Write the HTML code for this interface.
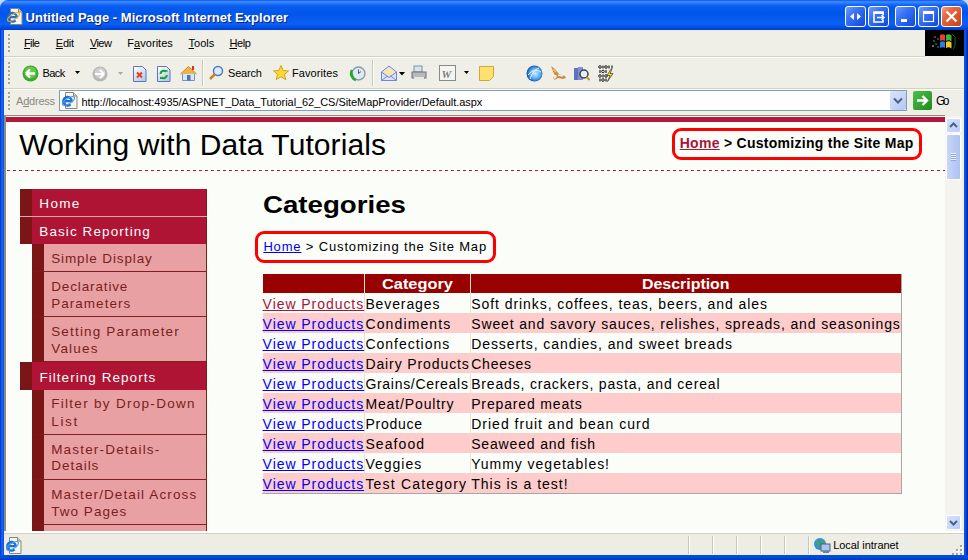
<!DOCTYPE html>
<html><head><meta charset="utf-8">
<style>

*{margin:0;padding:0;box-sizing:border-box}
html,body{width:968px;height:560px;overflow:hidden;background:#C8D8F0;font-family:"Liberation Sans",sans-serif}
.a{position:absolute;white-space:nowrap}
#title{left:0;top:0;width:968px;height:30px;border-radius:8px 8px 0 0;background:linear-gradient(#0A46D8 0,#2F80FF 1px,#3A8AFF 2px,#1F70F8 4px,#0A5CF0 6px,#0056EA 14px,#085CF2 20px,#0A60F6 24px,#0052E6 27px,#003CCC 30px)}
#ttext{left:26px;top:8px;color:#fff;font-weight:bold;font-size:13px;text-shadow:1px 1px 0 #0B1F7A}
.tb{width:21px;height:21px;top:6px;border:1px solid #fff;border-radius:3px;background:linear-gradient(135deg,#6F9CFF 0,#3A74F8 35%,#1F58E8 75%,#1848D0 100%)}
#frameL{left:0;top:30px;width:4px;height:530px;background:linear-gradient(90deg,#0028B8 0,#0A50E0 1px,#1A6AFF 2px,#0A5AF0 3px,#0050E0 4px)}
#frameR{left:964px;top:30px;width:4px;height:530px;background:linear-gradient(90deg,#0050E0 0,#0A5AF0 1px,#0048D8 2px,#0030B0 3px,#002098 4px)}
#frameB{left:0;top:555px;width:968px;height:5px;background:linear-gradient(#0050E0,#0048D8 3px,#0038B0)}
#chrome{left:4px;top:30px;width:960px;height:87px;background:#F0EFE7}
.menu{top:37px;font-size:11px;color:#000}
.menu u{text-decoration:none;border-bottom:1px solid #000}
.sep{background:#D5D2C2}
.vsep{width:1px;height:26px;top:60px;background:#C9C6B5;box-shadow:1px 0 0 #fff}
.tt{font-size:11px;color:#000;top:67px}
#page{left:4px;top:115px;width:960px;height:418px;background:#FBFDF9;overflow:hidden;border-left:2px solid #8E8C80;border-top:1px solid #8E8C80}
#status{left:4px;top:531px;width:960px;height:24px;background:#EEEDE5;border-top:2px solid #FFFFFF}
.v{font-size:14px;letter-spacing:0.75px}
.mi{left:14px;width:188px;height:27px;background:#B01434;border-left:12px solid #7A1616}
.mt{color:#fff;font-size:14px;letter-spacing:0.95px}
.si{left:26px;width:176px;background:#E8A0A2;border-left:12px solid #7A1616;border-bottom:1px solid #7E2020;border-right:1px solid #7E2020}
.st{color:#7A1E1E;font-size:14px;letter-spacing:0.75px;line-height:17px;left:45px}
.row{left:257px;width:639px;height:20px}
.pk{background:#FFCCCC}
.cell{font-size:14px;letter-spacing:0.92px;top:0}
.lnk{color:#0000FF;text-decoration:underline}

svg{display:block}

</style></head><body>

<div id="title" class="a"></div>
<div class="a" style="left:6px;top:8px;width:16px;height:16px;">
<svg width="17" height="17"><path d="M4.5 0.5h8l3.5 3.5v12.5h-11.5z" fill="#F6F5EE" stroke="#8A8672"/><path d="M12.5 0.5v3.5h3.5" fill="#D8D4C4" stroke="#8A8672"/><path d="M3 9.2h7.8a4.3 4.3 0 1 0-1.3 3.2" stroke="#1B6FDA" stroke-width="2.3" fill="none"/><ellipse cx="7.5" cy="9" rx="6.8" ry="2.6" transform="rotate(-32 7.5 9)" stroke="#F2A81C" stroke-width="1.1" fill="none"/></svg></div>
<div class="a tb" style="left:845px"><svg width="19" height="19"><path d="M8 6l-4 3.5 4 3.5zM11 6l4 3.5-4 3.5z" fill="#fff"/></svg></div>
<div class="a tb" style="left:868px"><svg width="19" height="19"><path d="M5 6v9h9v-2.5M5 6h9v2.5" stroke="#fff" stroke-width="1.6" fill="none"/><rect x="4.2" y="4.2" width="10.6" height="2.6" fill="#fff"/><path d="M8 10.5h7M12.5 8.3l2.5 2.2-2.5 2.2" stroke="#fff" stroke-width="1.4" fill="none"/></svg></div>
<div class="a tb" style="left:895px"><svg width="19" height="19"><rect x="5" y="12" width="6" height="3" fill="#fff"/></svg></div>
<div class="a tb" style="left:918px"><svg width="19" height="19"><rect x="4.5" y="4.5" width="10" height="10" stroke="#fff" stroke-width="1.2" fill="none"/><rect x="4" y="4" width="11" height="3" fill="#fff"/></svg></div>
<div class="a tb" style="left:941px;background:linear-gradient(135deg,#F4A080 0,#EA6A42 30%,#DD5328 65%,#C9411A)"><svg width="19" height="19"><path d="M4.5 4.5l10 10M14.5 4.5l-10 10" stroke="#fff" stroke-width="2.4"/></svg></div>
<div id="frameL" class="a"></div>
<div id="frameR" class="a"></div>
<div id="frameB" class="a"></div>
<div id="chrome" class="a"></div>
<div class="a" style="left:925px;top:30px;width:39px;height:26px;background:#000"><svg width="39" height="26"><g opacity="0.55"><rect x="9" y="6" width="2" height="2" fill="#E05030"/><rect x="8" y="10" width="2" height="2" fill="#3080E0"/><rect x="10" y="13" width="2" height="2" fill="#30A040"/><rect x="7" y="15" width="2" height="2" fill="#E0C030"/><rect x="12" y="8" width="2" height="2" fill="#30A040"/><rect x="12" y="16" width="2" height="2" fill="#3080E0"/></g><path d="M15 5q3-1.5 5 0v6q-2-1.5-5 0z" fill="#E8402A"/><path d="M21 5q3-1.5 5.5 0.5v6q-2.5-2-5.5-.5z" fill="#40B040"/><path d="M15 12q3-1.5 5 0v6q-2-1.5-5 0z" fill="#2A7AE8"/><path d="M21 12q3-1.5 5.5 0.5v6q-2.5-2-5.5-.5z" fill="#F0C820"/><path d="M27 4l3 3v9l-2 3" stroke="#30A040" stroke-width="1" fill="none" opacity="0.6"/></svg></div>
<div class="a sep" style="left:4px;top:56px;width:921px;height:1px;box-shadow:0 1px 0 #FAFAF6"></div>
<div class="a sep" style="left:4px;top:88px;width:960px;height:1px;box-shadow:0 1px 0 #FAFAF6"></div>
<!-- grips -->
<div class="a" style="left:8px;top:34px;width:2px;height:20px;background:repeating-linear-gradient(#A8A598 0 2px,transparent 2px 4px)"></div>
<div class="a" style="left:8px;top:62px;width:2px;height:22px;background:repeating-linear-gradient(#A8A598 0 2px,transparent 2px 4px)"></div>
<div class="a" style="left:8px;top:92px;width:2px;height:18px;background:repeating-linear-gradient(#A8A598 0 2px,transparent 2px 4px)"></div>
<!-- toolbar -->
<div class="a" style="left:22px;top:65px"><svg width="17" height="17"><circle cx="8.5" cy="8.5" r="8" fill="#3DA82E"/><circle cx="8.5" cy="7.5" r="6" fill="#62C84A"/><path d="M4 8.5l4-4M4 8.5l4 4M4 8.5h9" stroke="#fff" stroke-width="2.4" fill="none"/></svg></div>
<div class="a" style="left:75px;top:71px"><svg width="5" height="3"><path d="M0 0h5L2.5 3z" fill="#000"/></svg></div>
<div class="a" style="left:92px;top:66px"><svg width="16" height="16"><circle cx="8" cy="8" r="7.5" fill="#B5B5B5"/><circle cx="8" cy="7" r="5.5" fill="#D0D0D0"/><path d="M12 8l-4-4M12 8l-4 4M12 8H3" stroke="#fff" stroke-width="2.2" fill="none"/></svg></div>
<div class="a" style="left:118px;top:72px"><svg width="5" height="3"><path d="M0 0h5L2.5 3z" fill="#A8A8A8"/></svg></div>
<div class="a" style="left:133px;top:66px"><svg width="14" height="16"><defs><linearGradient id="pg" x1="0" y1="0" x2="0.6" y2="1"><stop offset="0" stop-color="#FFFFFF"/><stop offset="1" stop-color="#B8CCF0"/></linearGradient></defs><path d="M0.5 0.5h9l3.5 3.5v11.5h-12.5z" fill="url(#pg)" stroke="#5A78B8"/><path d="M4 6.5l5 5M9 6.5l-5 5" stroke="#E8401A" stroke-width="2"/></svg></div>
<div class="a" style="left:157px;top:66px"><svg width="14" height="16"><path d="M0.5 0.5h9l3.5 3.5v11.5h-12.5z" fill="url(#pg)" stroke="#5A78B8"/><path d="M3.5 8a3.2 3.2 0 0 1 5.5-2.3M9.8 9a3.2 3.2 0 0 1-5.5 2.3" stroke="#18A028" stroke-width="2" fill="none"/><path d="M8 4h2.5v2.5zM5.5 13H3v-2.5z" fill="#18A028"/></svg></div>
<div class="a" style="left:180px;top:65px"><svg width="17" height="16"><path d="M2.5 8.5v7h12v-7" fill="#D8E6FA" stroke="#7A90B8"/><path d="M0.5 9L8.5 1.5 16.5 9" fill="#F2B24A" stroke="#C88A28"/><rect x="12" y="1" width="2" height="4" fill="#D83020"/><rect x="7" y="10" width="3.5" height="5.5" fill="#5070B8"/></svg></div>
<div class="a vsep" style="left:202px"></div>
<div class="a" style="left:208px;top:65px"><svg width="16" height="16"><circle cx="10" cy="6" r="4.5" fill="#D8ECFF" stroke="#4A7AB8" stroke-width="1.5"/><path d="M7 9l-5 5" stroke="#D08020" stroke-width="2.5"/></svg></div>
<div class="a" style="left:273px;top:65px"><svg width="16" height="16"><path d="M8 0.5l2.2 5 5.3.4-4 3.5 1.3 5.3L8 11.8 3.2 14.7l1.3-5.3-4-3.5 5.3-.4z" fill="#FFD830" stroke="#C89010" stroke-width="0.8"/></svg></div>
<div class="a" style="left:349px;top:65px"><svg width="17" height="17"><circle cx="9.5" cy="8.5" r="6.5" fill="#DDEBF8" stroke="#8A9AA8" stroke-width="1.4"/><path d="M9.5 4.5v4l2.5-2" stroke="#505A66" stroke-width="1" fill="none"/><path d="M3 5a7 7 0 0 0 4 10" stroke="#28A828" stroke-width="2.6" fill="none"/><path d="M0.5 9.5l3.5-1 0.5 4z" fill="#28A828"/></svg></div>
<div class="a vsep" style="left:372px"></div>
<div class="a" style="left:381px;top:65px"><svg width="16" height="16"><path d="M0.5 7l7.5-6 7.5 6v8.5h-15z" fill="#D8E4FA" stroke="#7088C8"/><path d="M3 5.5q5-4 10 0v3l-5 3-5-3z" fill="#F8E4B0"/><path d="M0.5 7l7.5 5.5 7.5-5.5M0.5 15.5l6-4.5M15.5 15.5l-6-4.5" stroke="#7088C8" fill="none"/></svg></div>
<div class="a" style="left:399px;top:72px"><svg width="6" height="4"><path d="M0 0h6L3 3.5z" fill="#000"/></svg></div>
<div class="a" style="left:411px;top:65px"><svg width="16" height="16"><rect x="3" y="1" width="8" height="6" fill="#D8E4F0" stroke="#8090A0"/><rect x="1" y="7" width="14" height="6" fill="#B8B8B8" stroke="#707070"/><rect x="3" y="12" width="10" height="3" fill="#E8E8E8"/></svg></div>
<div class="a" style="left:439px;top:65px"><svg width="17" height="16"><rect x="0.5" y="0.5" width="16" height="15" fill="#F4F4F0" stroke="#8A8A8A"/><text x="2.5" y="12.5" font-size="11" font-weight="bold" font-style="italic" fill="#808080" font-family="Liberation Serif">W</text></svg></div>
<div class="a" style="left:464px;top:71px"><svg width="5" height="3"><path d="M0 0h5L2.5 3z" fill="#000"/></svg></div>
<div class="a" style="left:479px;top:66px"><svg width="15" height="15"><path d="M0.5 0.5h14v10l-4 4h-10z" fill="#FFE070" stroke="#D0A830"/></svg></div>
<div class="a" style="left:526px;top:65px"><svg width="17" height="17"><defs><radialGradient id="gl" cx="0.55" cy="0.5" r="0.55"><stop offset="0" stop-color="#C8ECFF"/><stop offset="0.6" stop-color="#58A8F0"/><stop offset="1" stop-color="#1048A8"/></radialGradient></defs><circle cx="8.5" cy="8.5" r="8" fill="url(#gl)"/><path d="M2 10q6.5-8 13-3M4 14q3-9 9-11" stroke="#F0F8FF" stroke-width="0.9" fill="none"/></svg></div>
<div class="a" style="left:550px;top:65px"><svg width="17" height="16"><path d="M1 1l4 3 4 5 6 2 1 2-3 1-5-1-3 2-2-2 1-4z" fill="#D08A40"/><path d="M2 9l3 4 1-2zM8 10l5 1" stroke="#F4F0E8" stroke-width="1.5" fill="none"/><path d="M3 4l3 3" stroke="#F0C080" stroke-width="1.2"/></svg></div>
<div class="a" style="left:573px;top:65px"><svg width="17" height="17"><rect x="1" y="3" width="4" height="12" fill="#6070C0"/><rect x="5" y="2" width="5" height="13" fill="#8090D0"/><circle cx="11" cy="9" r="4" fill="#E0F0FF" stroke="#404040" stroke-width="1.5"/><path d="M13.5 12l3 3" stroke="#D09030" stroke-width="2"/></svg></div>
<div class="a" style="left:598px;top:65px"><svg width="17" height="17"><g fill="none" stroke="#202020" stroke-width="1"><circle cx="2" cy="2" r="1.3"/><circle cx="8" cy="2" r="1.3"/><circle cx="5" cy="6.5" r="1.3"/><circle cx="2" cy="11" r="1.3"/><circle cx="8" cy="11" r="1.3"/><circle cx="5" cy="15" r="1.3"/></g><g stroke="#202020" stroke-width="1.2"><path d="M5 0.5v3M11 0.5v3M2 5v3M8 5v3M5 9.5v3M2 13.5v3M8 13.5v3M14 0.5v3"/></g><path d="M13 4l-4 6.5h3l-2.5 6 5.5-8h-3l2-4.5z" fill="#F8E818" stroke="#303030" stroke-width="0.7"/></svg></div>
<!-- address -->
<div class="a" style="left:59px;top:90px;width:848px;height:21px;background:#fff;border:1px solid #7F9DB9"></div>
<div class="a" style="left:61px;top:92px"><svg width="17" height="17"><path d="M4.5 0.5h8l3.5 3.5v12.5h-11.5z" fill="#F6F5EE" stroke="#8A8672"/><path d="M12.5 0.5v3.5h3.5" fill="#D8D4C4" stroke="#8A8672"/><path d="M3 9.2h7.8a4.3 4.3 0 1 0-1.3 3.2" stroke="#1B6FDA" stroke-width="2.3" fill="none"/><ellipse cx="7.5" cy="9" rx="6.8" ry="2.6" transform="rotate(-32 7.5 9)" stroke="#4AA0F0" stroke-width="1.1" fill="none"/></svg></div>
<div class="a" style="left:890px;top:91px;width:16px;height:19px;border-radius:2px;background:linear-gradient(135deg,#D8E4FC,#B4C8F4)"><svg width="16" height="19"><path d="M4 7.5l4 4 4-4" stroke="#4D6185" stroke-width="2" fill="none"/></svg></div>
<div class="a" style="left:913px;top:91px;width:19px;height:19px;border-radius:2px;background:linear-gradient(135deg,#4CC04A,#1E8A1E)"><svg width="19" height="19"><path d="M4 9.5h10M9.5 5l4.5 4.5-4.5 4.5" stroke="#fff" stroke-width="2.4" fill="none"/></svg></div>

<div class="a" style="left:4px;top:115px;width:2px;height:418px;background:#8E8C80"></div>
<div class="a" style="left:4px;top:115px;width:941px;height:1px;background:#8E8C80"></div>
<div class="a" style="left:6px;top:116px;width:939px;height:415px;background:#FBFDF9"></div>
<div class="a" style="left:6px;top:117px;width:939px;height:5px;background:#B5173C"></div>
<div class="a" style="left:672px;top:128px;width:250px;height:32px;border:3px solid #FF0000;border-radius:9px"></div>
<div class="a" style="left:7px;top:170px;width:938px;height:1px;background:repeating-linear-gradient(90deg,#B8163E 0 3px,transparent 3px 6px)"></div>
<!-- menu -->
<div class="a" style="left:20px;top:189px;width:187px;height:27px;background:#B01434;border-left:12px solid #7A1616;border-right:1px solid #7E1A22"></div>
<div class="a" style="left:20px;top:216px;width:187px;height:1px;background:#E3A4AE"></div>
<div class="a" style="left:20px;top:217px;width:187px;height:27px;background:#B01434;border-left:12px solid #7A1616;border-right:1px solid #7E1A22"></div>
<div class="a" style="left:32px;top:244px;width:175px;height:28px;background:#E8A0A2;border-left:12px solid #7A1616;border-bottom:1px solid #7E2020;border-right:1px solid #7E2020"></div>
<div class="a" style="left:32px;top:272px;width:175px;height:45px;background:#E8A0A2;border-left:12px solid #7A1616;border-bottom:1px solid #7E2020;border-right:1px solid #7E2020"></div>
<div class="a" style="left:32px;top:317px;width:175px;height:45px;background:#E8A0A2;border-left:12px solid #7A1616;border-bottom:1px solid #7E2020;border-right:1px solid #7E2020"></div>
<div class="a" style="left:20px;top:362px;width:187px;height:28px;background:#B01434;border-left:12px solid #7A1616;border-right:1px solid #7E1A22"></div>
<div class="a" style="left:32px;top:390px;width:175px;height:45px;background:#E8A0A2;border-left:12px solid #7A1616;border-bottom:1px solid #7E2020;border-right:1px solid #7E2020"></div>
<div class="a" style="left:32px;top:435px;width:175px;height:45px;background:#E8A0A2;border-left:12px solid #7A1616;border-bottom:1px solid #7E2020;border-right:1px solid #7E2020"></div>
<div class="a" style="left:32px;top:480px;width:175px;height:45px;background:#E8A0A2;border-left:12px solid #7A1616;border-bottom:1px solid #7E2020;border-right:1px solid #7E2020"></div>
<div class="a" style="left:32px;top:525px;width:175px;height:6px;background:#E8A0A2;border-left:12px solid #7A1616;border-right:1px solid #7E2020"></div>
<!-- main -->
<div class="a" style="left:255px;top:231px;width:241px;height:32px;border:3px solid #FF0000;border-radius:9px"></div>
<div class="a" style="left:262px;top:274px;width:640px;height:220px;background:#FBFDF9;border-right:1px solid #A8A8A0;border-bottom:1px solid #A8A8A0"></div>
<div class="a" style="left:263px;top:274px;width:638px;height:19px;background:#990000"></div>
<div class="a" style="left:263px;top:313px;width:638px;height:20px;background:#FFCCCC"></div>
<div class="a" style="left:263px;top:353px;width:638px;height:20px;background:#FFCCCC"></div>
<div class="a" style="left:263px;top:393px;width:638px;height:20px;background:#FFCCCC"></div>
<div class="a" style="left:263px;top:433px;width:638px;height:20px;background:#FFCCCC"></div>
<div class="a" style="left:263px;top:473px;width:638px;height:20px;background:#FFCCCC"></div>
<div class="a" style="left:364px;top:274px;width:1px;height:219px;background:#E6E2D6"></div>
<div class="a" style="left:470px;top:274px;width:1px;height:219px;background:#E6E2D6"></div>
<div class="a" style="left:945px;top:116px;width:17px;height:415px;background:#F4F3EE"></div>
<div class="a" style="left:962px;top:115px;width:2px;height:416px;background:#F0EEE4"></div>
<div class="a" style="left:946px;top:118px;width:15px;height:15px;border:1px solid #fff;border-radius:2px;background:linear-gradient(135deg,#D6E2FD,#B9CCF7)"><svg width="13" height="13"><path d="M3 8l3.5-3.5L10 8" stroke="#4D6185" stroke-width="2" fill="none"/></svg></div>
<div class="a" style="left:946px;top:134px;width:15px;height:46px;border:1px solid #fff;border-radius:2px;background:linear-gradient(90deg,#C8D6FA,#BACBF5 50%,#AEC2F2)"><svg width="13" height="44"><path d="M4 18.5h5M4 20.5h5M4 22.5h5M4 24.5h5" stroke="#EEF3FF" stroke-width="1"/><path d="M4 19.5h5M4 21.5h5M4 23.5h5M4 25.5h5" stroke="#8CA6E0" stroke-width="1"/></svg></div>
<div class="a" style="left:946px;top:515px;width:15px;height:15px;border:1px solid #fff;border-radius:2px;background:linear-gradient(135deg,#D6E2FD,#B9CCF7)"><svg width="13" height="13"><path d="M3 5l3.5 3.5L10 5" stroke="#4D6185" stroke-width="2" fill="none"/></svg></div>
<div id="status" class="a"></div>
<div class="a" style="left:4px;top:533px;width:960px;height:1px;background:#D6D2C2"></div>
<div class="a" style="left:5px;top:537px"><svg width="17" height="17"><path d="M4.5 0.5h8l3.5 3.5v12.5h-11.5z" fill="#F6F5EE" stroke="#8A8672"/><path d="M12.5 0.5v3.5h3.5" fill="#D8D4C4" stroke="#8A8672"/><path d="M3 9.2h7.8a4.3 4.3 0 1 0-1.3 3.2" stroke="#1B6FDA" stroke-width="2.3" fill="none"/><ellipse cx="7.5" cy="9" rx="6.8" ry="2.6" transform="rotate(-32 7.5 9)" stroke="#4AA0F0" stroke-width="1.1" fill="none"/></svg></div>
<div class="a" style="left:688px;top:536px;width:1px;height:18px;background:#C9C6B5;box-shadow:1px 0 0 #fff"></div>
<div class="a" style="left:712px;top:536px;width:1px;height:18px;background:#C9C6B5;box-shadow:1px 0 0 #fff"></div>
<div class="a" style="left:736px;top:536px;width:1px;height:18px;background:#C9C6B5;box-shadow:1px 0 0 #fff"></div>
<div class="a" style="left:760px;top:536px;width:1px;height:18px;background:#C9C6B5;box-shadow:1px 0 0 #fff"></div>
<div class="a" style="left:784px;top:536px;width:1px;height:18px;background:#C9C6B5;box-shadow:1px 0 0 #fff"></div>
<div class="a" style="left:808px;top:536px;width:1px;height:18px;background:#C9C6B5;box-shadow:1px 0 0 #fff"></div>
<div class="a" style="left:813px;top:537px"><svg width="18" height="17"><circle cx="7" cy="7" r="6" fill="#3A8AE0"/><path d="M3 4c2 1 3 3 2 6M9 2c-1 2 0 4 3 4" stroke="#40B040" stroke-width="2" fill="none"/><rect x="8" y="7" width="9" height="7" fill="#A8C4F0" stroke="#50607A"/><rect x="10" y="14" width="6" height="2" fill="#7080A0"/></svg></div>
<div class="a" style="left:951px;top:544px"><svg width="12" height="11"><g fill="#fff"><rect x="10" y="2" width="2" height="2"/><rect x="6" y="6" width="2" height="2"/><rect x="10" y="6" width="2" height="2"/><rect x="2" y="10" width="2" height="1"/><rect x="6" y="10" width="2" height="1"/><rect x="10" y="10" width="2" height="1"/></g><g fill="#A8A494"><rect x="9" y="1" width="2" height="2"/><rect x="5" y="5" width="2" height="2"/><rect x="9" y="5" width="2" height="2"/><rect x="1" y="9" width="2" height="2"/><rect x="5" y="9" width="2" height="2"/><rect x="9" y="9" width="2" height="2"/></g></svg></div>
<div class="a" style="left:19.3px;top:130.00px;font-size:30px;line-height:30px;font-weight:normal;color:#000;letter-spacing:0.077px;">Working with Data Tutorials</div>
<div class="a" style="left:679.7px;top:136.00px;font-size:14px;line-height:14px;font-weight:bold;color:#000;letter-spacing:0.281px;"><span style="color:#A4163A;text-decoration:underline">Home</span> &gt; Customizing the Site Map</div>
<div class="a" style="left:262.9px;top:193.00px;font-size:24px;line-height:24px;font-weight:bold;color:#000;letter-spacing:0.000px;transform:scaleX(1.1521);transform-origin:0 0;">Categories</div>
<div class="a" style="left:263.4px;top:240.00px;font-size:13px;line-height:13px;font-weight:normal;color:#000;letter-spacing:0.837px;"><span style="color:#0000EE;text-decoration:underline">Home</span> &gt; Customizing the Site Map</div>
<div class="a" style="left:39.3px;top:197.00px;font-size:13.5px;line-height:13.5px;font-weight:normal;color:#fff;letter-spacing:1.355px;">Home</div>
<div class="a" style="left:39.3px;top:225.00px;font-size:13.5px;line-height:13.5px;font-weight:normal;color:#fff;letter-spacing:1.091px;">Basic Reporting</div>
<div class="a" style="left:51.2px;top:252.00px;font-size:13.5px;line-height:13.5px;font-weight:normal;color:#7A1E1E;letter-spacing:0.877px;">Simple Display</div>
<div class="a" style="left:51.2px;top:280.00px;font-size:13.5px;line-height:13.5px;font-weight:normal;color:#7A1E1E;letter-spacing:0.865px;">Declarative</div>
<div class="a" style="left:51.2px;top:297.00px;font-size:13.5px;line-height:13.5px;font-weight:normal;color:#7A1E1E;letter-spacing:1.033px;">Parameters</div>
<div class="a" style="left:51.2px;top:325.00px;font-size:13.5px;line-height:13.5px;font-weight:normal;color:#7A1E1E;letter-spacing:1.173px;">Setting Parameter</div>
<div class="a" style="left:51.2px;top:342.00px;font-size:13.5px;line-height:13.5px;font-weight:normal;color:#7A1E1E;letter-spacing:1.200px;">Values</div>
<div class="a" style="left:39.4px;top:371.00px;font-size:13.5px;line-height:13.5px;font-weight:normal;color:#fff;letter-spacing:1.052px;">Filtering Reports</div>
<div class="a" style="left:51.2px;top:397.00px;font-size:13.5px;line-height:13.5px;font-weight:normal;color:#7A1E1E;letter-spacing:1.297px;">Filter by Drop-Down</div>
<div class="a" style="left:51.2px;top:415.00px;font-size:13.5px;line-height:13.5px;font-weight:normal;color:#7A1E1E;letter-spacing:1.688px;">List</div>
<div class="a" style="left:51.2px;top:443.00px;font-size:13.5px;line-height:13.5px;font-weight:normal;color:#7A1E1E;letter-spacing:1.183px;">Master-Details-</div>
<div class="a" style="left:51.2px;top:459.00px;font-size:13.5px;line-height:13.5px;font-weight:normal;color:#7A1E1E;letter-spacing:0.986px;">Details</div>
<div class="a" style="left:51.2px;top:488.00px;font-size:13.5px;line-height:13.5px;font-weight:normal;color:#7A1E1E;letter-spacing:1.115px;">Master/Detail Across</div>
<div class="a" style="left:51.2px;top:505.00px;font-size:13.5px;line-height:13.5px;font-weight:normal;color:#7A1E1E;letter-spacing:1.035px;">Two Pages</div>
<div class="a" style="left:382.4px;top:277.00px;font-size:14px;line-height:14px;font-weight:bold;color:#fff;letter-spacing:0.000px;transform:scaleX(1.1684);transform-origin:0 0;">Category</div>
<div class="a" style="left:641.9px;top:277.00px;font-size:14px;line-height:14px;font-weight:bold;color:#fff;letter-spacing:0.000px;transform:scaleX(1.1371);transform-origin:0 0;">Description</div>
<div class="a" style="left:262.6px;top:297.00px;font-size:14px;line-height:14px;font-weight:normal;color:#A4163A;letter-spacing:0.949px;text-decoration:underline;">View Products</div>
<div class="a" style="left:365.4px;top:297.00px;font-size:14px;line-height:14px;font-weight:normal;color:#000;letter-spacing:0.885px;">Beverages</div>
<div class="a" style="left:471.2px;top:297.00px;font-size:14px;line-height:14px;font-weight:normal;color:#000;letter-spacing:0.937px;">Soft drinks, coffees, teas, beers, and ales</div>
<div class="a" style="left:262.6px;top:317.00px;font-size:14px;line-height:14px;font-weight:normal;color:#0000FF;letter-spacing:0.949px;text-decoration:underline;">View Products</div>
<div class="a" style="left:365.4px;top:317.00px;font-size:14px;line-height:14px;font-weight:normal;color:#000;letter-spacing:1.135px;">Condiments</div>
<div class="a" style="left:471.2px;top:317.00px;font-size:14px;line-height:14px;font-weight:normal;color:#000;letter-spacing:0.871px;">Sweet and savory sauces, relishes, spreads, and seasonings</div>
<div class="a" style="left:262.6px;top:337.00px;font-size:14px;line-height:14px;font-weight:normal;color:#0000FF;letter-spacing:0.949px;text-decoration:underline;">View Products</div>
<div class="a" style="left:365.4px;top:337.00px;font-size:14px;line-height:14px;font-weight:normal;color:#000;letter-spacing:0.998px;">Confections</div>
<div class="a" style="left:471.2px;top:337.00px;font-size:14px;line-height:14px;font-weight:normal;color:#000;letter-spacing:0.916px;">Desserts, candies, and sweet breads</div>
<div class="a" style="left:262.6px;top:357.00px;font-size:14px;line-height:14px;font-weight:normal;color:#0000FF;letter-spacing:0.949px;text-decoration:underline;">View Products</div>
<div class="a" style="left:365.4px;top:357.00px;font-size:14px;line-height:14px;font-weight:normal;color:#000;letter-spacing:0.893px;">Dairy Products</div>
<div class="a" style="left:471.2px;top:357.00px;font-size:14px;line-height:14px;font-weight:normal;color:#000;letter-spacing:0.776px;">Cheeses</div>
<div class="a" style="left:262.6px;top:377.00px;font-size:14px;line-height:14px;font-weight:normal;color:#0000FF;letter-spacing:0.949px;text-decoration:underline;">View Products</div>
<div class="a" style="left:365.4px;top:377.00px;font-size:14px;line-height:14px;font-weight:normal;color:#000;letter-spacing:0.703px;">Grains/Cereals</div>
<div class="a" style="left:471.2px;top:377.00px;font-size:14px;line-height:14px;font-weight:normal;color:#000;letter-spacing:0.826px;">Breads, crackers, pasta, and cereal</div>
<div class="a" style="left:262.6px;top:397.00px;font-size:14px;line-height:14px;font-weight:normal;color:#0000FF;letter-spacing:0.949px;text-decoration:underline;">View Products</div>
<div class="a" style="left:365.4px;top:397.00px;font-size:14px;line-height:14px;font-weight:normal;color:#000;letter-spacing:0.875px;">Meat/Poultry</div>
<div class="a" style="left:471.2px;top:397.00px;font-size:14px;line-height:14px;font-weight:normal;color:#000;letter-spacing:0.847px;">Prepared meats</div>
<div class="a" style="left:262.6px;top:417.00px;font-size:14px;line-height:14px;font-weight:normal;color:#0000FF;letter-spacing:0.949px;text-decoration:underline;">View Products</div>
<div class="a" style="left:365.4px;top:417.00px;font-size:14px;line-height:14px;font-weight:normal;color:#000;letter-spacing:0.761px;">Produce</div>
<div class="a" style="left:471.2px;top:417.00px;font-size:14px;line-height:14px;font-weight:normal;color:#000;letter-spacing:1.009px;">Dried fruit and bean curd</div>
<div class="a" style="left:262.6px;top:437.00px;font-size:14px;line-height:14px;font-weight:normal;color:#0000FF;letter-spacing:0.949px;text-decoration:underline;">View Products</div>
<div class="a" style="left:365.4px;top:437.00px;font-size:14px;line-height:14px;font-weight:normal;color:#000;letter-spacing:1.091px;">Seafood</div>
<div class="a" style="left:471.2px;top:437.00px;font-size:14px;line-height:14px;font-weight:normal;color:#000;letter-spacing:0.834px;">Seaweed and fish</div>
<div class="a" style="left:262.6px;top:457.00px;font-size:14px;line-height:14px;font-weight:normal;color:#0000FF;letter-spacing:0.949px;text-decoration:underline;">View Products</div>
<div class="a" style="left:365.4px;top:457.00px;font-size:14px;line-height:14px;font-weight:normal;color:#000;letter-spacing:0.999px;">Veggies</div>
<div class="a" style="left:471.2px;top:457.00px;font-size:14px;line-height:14px;font-weight:normal;color:#000;letter-spacing:0.978px;">Yummy vegetables!</div>
<div class="a" style="left:262.6px;top:477.00px;font-size:14px;line-height:14px;font-weight:normal;color:#0000FF;letter-spacing:0.949px;text-decoration:underline;">View Products</div>
<div class="a" style="left:365.4px;top:477.00px;font-size:14px;line-height:14px;font-weight:normal;color:#000;letter-spacing:1.187px;">Test Category</div>
<div class="a" style="left:471.2px;top:477.00px;font-size:14px;line-height:14px;font-weight:normal;color:#000;letter-spacing:0.997px;">This is a test!</div>
<div class="a" style="left:25.5px;top:11.00px;font-size:13px;line-height:13px;font-weight:bold;color:#fff;letter-spacing:0.045px;text-shadow:1px 1px 0 #0B1F7A;">Untitled Page - Microsoft Internet Explorer</div>
<div class="a" style="left:24.0px;top:38.00px;font-size:11px;line-height:11px;font-weight:normal;color:#000;letter-spacing:-0.623px;"><u>F</u>ile</div>
<div class="a" style="left:55.8px;top:38.00px;font-size:11px;line-height:11px;font-weight:normal;color:#000;letter-spacing:-0.263px;"><u>E</u>dit</div>
<div class="a" style="left:89.9px;top:38.00px;font-size:11px;line-height:11px;font-weight:normal;color:#000;letter-spacing:-0.559px;"><u>V</u>iew</div>
<div class="a" style="left:127.3px;top:38.00px;font-size:11px;line-height:11px;font-weight:normal;color:#000;letter-spacing:0.039px;">F<u>a</u>vorites</div>
<div class="a" style="left:188.6px;top:38.00px;font-size:11px;line-height:11px;font-weight:normal;color:#000;letter-spacing:-0.027px;"><u>T</u>ools</div>
<div class="a" style="left:229.4px;top:38.00px;font-size:11px;line-height:11px;font-weight:normal;color:#000;letter-spacing:-0.387px;"><u>H</u>elp</div>
<div class="a" style="left:42.4px;top:68.00px;font-size:11px;line-height:11px;font-weight:normal;color:#000;letter-spacing:-0.496px;">Back</div>
<div class="a" style="left:228.0px;top:68.00px;font-size:11px;line-height:11px;font-weight:normal;color:#000;letter-spacing:-0.176px;">Search</div>
<div class="a" style="left:292.0px;top:68.00px;font-size:11px;line-height:11px;font-weight:normal;color:#000;letter-spacing:0.091px;">Favorites</div>
<div class="a" style="left:16.0px;top:96.00px;font-size:11px;line-height:11px;font-weight:normal;color:#8A887C;letter-spacing:-0.216px;">A<u>d</u>dress</div>
<div class="a" style="left:81.4px;top:97.00px;font-size:11px;line-height:11px;font-weight:normal;color:#000;letter-spacing:-0.063px;">http://localhost:4935/ASPNET_Data_Tutorial_62_CS/SiteMapProvider/Default.aspx</div>
<div class="a" style="left:936.0px;top:95.00px;font-size:12px;line-height:12px;font-weight:normal;color:#000;letter-spacing:-2.556px;">Go</div>
<div class="a" style="left:833.2px;top:540.00px;font-size:11px;line-height:11px;font-weight:normal;color:#000;letter-spacing:-0.044px;">Local intranet</div>
</body></html>
